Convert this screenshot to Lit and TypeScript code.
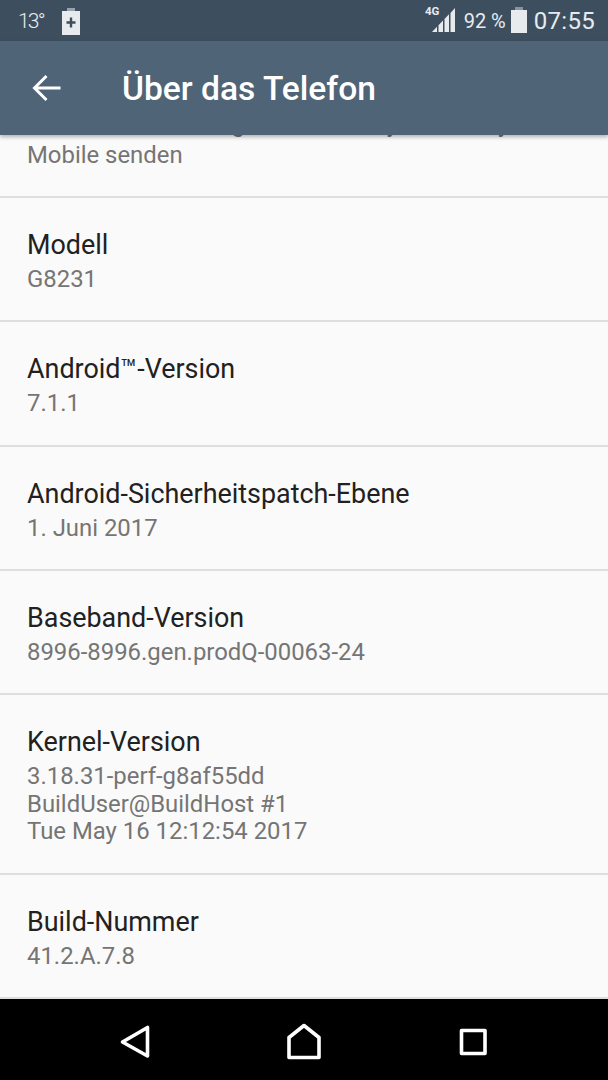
import { LitElement, html, css, svg } from "lit";
import { customElement } from "lit/decorators.js";

const rows: { title: string; lines: string[] }[] = [
  { title: "Modell", lines: ["G8231"] },
  { title: "Android™-Version", lines: ["7.1.1"] },
  { title: "Android-Sicherheitspatch-Ebene", lines: ["1. Juni 2017"] },
  { title: "Baseband-Version", lines: ["8996-8996.gen.prodQ-00063-24"] },
  { title: "Kernel-Version", lines: ["3.18.31-perf-g8af55dd", "BuildUser@BuildHost #1", "Tue May 16 12:12:54 2017"] },
  { title: "Build-Nummer", lines: ["41.2.A.7.8"] },
];

@customElement("app-root")
export class AppRoot extends LitElement {
  static styles = css`
    :host {
      display: flex;
      flex-direction: column;
      width: 608px;
      height: 1080px;
      overflow: hidden;
      background: #fafafa;
      font-family: Roboto, "Liberation Sans", sans-serif;
    }
    .status {
      height: 41px;
      flex: none;
      background: #3d4f5e;
      color: #e8ebee;
      display: flex;
      align-items: center;
      padding: 0 13px 0 18px;
      font-size: 20px;
    }
    .temp { font-size: 21px; letter-spacing: -1.8px; font-weight: 300; }
    .plug { margin-left: 18px; }
    .spacer { flex: 1; }
    .signal { margin-right: 8px; }
    .pct { font-size: 20px; }
    .bat { margin-left: 5px; margin-bottom: 1px; }
    .time { font-size: 24px; margin-left: 7px; font-weight: 400; letter-spacing: 0.3px; }
    .appbar {
      height: 94px;
      flex: none;
      background: #4f6477;
      display: flex;
      align-items: center;
      color: #fff;
      box-shadow: 0 2px 4px rgba(0, 0, 0, 0.3);
      position: relative;
      z-index: 2;
    }
    .back { margin-left: 32px; width: 30px; height: 28px; display: block; }
    .title { margin-left: 60px; font-size: 33.6px; font-weight: 500; }
    .list { flex: 1; overflow: hidden; min-height: 0; }
    .clip { height: 61px; border-bottom: 2px solid #dedede; position: relative; overflow: hidden; }
    .clip .sub { position: absolute; left: 27px; bottom: 27px; white-space: nowrap; line-height: 28px; }
    .clip .ghost { bottom: 58px; }
    .row {
      padding: 27px 27px 0;
      border-bottom: 2px solid #dedede;
      height: 124.3px;
      box-sizing: border-box;
    }
    .row.tall { height: 179.5px; }
    .name { font-size: 26.9px; line-height: 41px; color: #212121; }
    .sub { font-size: 23.9px; line-height: 27.6px; color: #757575; }
    .nav {
      height: 81px;
      flex: none;
      background: #000;
    }
    .nav svg { display: block; width: 608px; height: 81px; }
  `;

  render() {
    return html`
      <div class="status">
        <span class="temp">13°</span>
        <svg class="plug" width="18" height="28" viewBox="0 0 18 28">
          <path d="M5 1h8v3H5z" fill="#98a2aa" />
          <path d="M0 4h18v24H0z" fill="#e8ebee" />
          <path d="M9 10.500v10M4.500 15.500h9" stroke="#3d4f5e" stroke-width="2.400" fill="none" />
        </svg>
        <span class="spacer"></span>
        <svg class="signal" width="32" height="41" viewBox="0 0 32 41">
          <text x="1" y="15" font-size="11.500" font-weight="700" fill="#e8ebee" font-family="Roboto, sans-serif">4G</text>
          <path d="M8 32l5-5.200V32zM14.500 32V25.200L19 20.500V32zM20.500 32V19L25 14.300V32zM26.500 32V13L31 8V32z" fill="#e8ebee" />
        </svg>
        <span class="pct">92 %</span>
        <svg class="bat" width="16" height="26" viewBox="0 0 16 26">
          <path d="M4 0h8v3H4z" fill="#8a949c" />
          <path d="M0 3h16v23H0z" fill="#e8ebee" />
        </svg>
        <span class="time">07:55</span>
      </div>
      <div class="appbar">
        <svg class="back" viewBox="0 0 30 28">
          <path d="M2.500 14H28.500M14.500 2 2.500 14l12 12" stroke="#fff" stroke-width="3" fill="none" />
        </svg>
        <span class="title">Über das Telefon</span>
      </div>
      <div class="list">
        <div class="clip">
          <div class="sub ghost">Die Infos werden täglich rein anonym an Sony</div>
          <div class="sub">Mobile senden</div>
        </div>
        ${rows.map(
          (r) => html`
            <div class="row ${r.lines.length > 1 ? "tall" : ""}">
              <div class="name">${r.title}</div>
              ${r.lines.map((l) => html`<div class="sub">${l}</div>`)}
            </div>
          `
        )}
      </div>
      <div class="nav">
        <svg viewBox="0 0 608 81">
          ${svg`
            <g fill="none" stroke="#fff" stroke-width="3.600" stroke-linejoin="round">
              <path d="M122.500 43 147.500 28.500V57z" />
              <path d="M289 58.500V38.500L304 26.500 319 38.500V58.500z" />
              <path d="M461.500 31.500H485V54.500H461.500z" />
            </g>
          `}
        </svg>
      </div>
    `;
  }
}
